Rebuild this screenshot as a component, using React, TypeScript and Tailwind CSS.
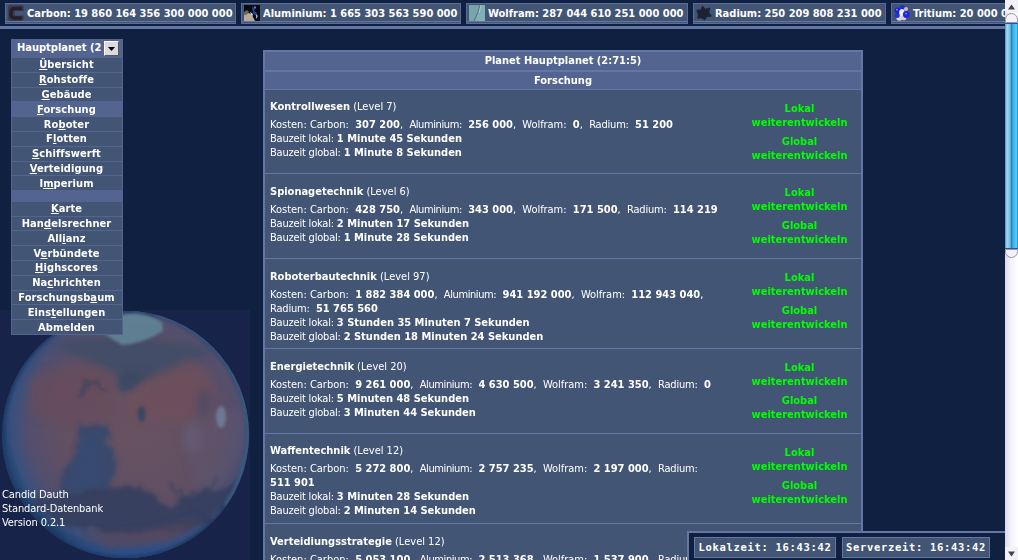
import React, { ReactNode } from "react";

function CarbonIcon() {
  return (
    <svg width="16" height="16" viewBox="0 0 16 16" className="shrink-0">
      <rect width="16" height="16" rx="3" fill="#3b3d52" />
      <path d="M14 3.5H6.5Q3 3.5 3 7v2.5Q3 13 6.5 13H14" fill="none" stroke="#241f2a" strokeWidth="3.4" />
      <rect x="7" y="6" width="9" height="4.5" fill="#435575" />
    </svg>
  );
}

function AluminiumIcon() {
  return (
    <svg width="16" height="16" viewBox="0 0 16 16" className="shrink-0">
      <rect width="16" height="16" fill="#080b14" />
      <path d="M0 10l4-2 4 1 1 3 2 4H0z" fill="#b9aa9c" />
      <path d="M0 7l3-2 2 2-3 3H0z" fill="#5c6f5d" />
      <path d="M8 2l3 1-1 3 3 2-1 3-3-3z" fill="#24459b" />
      <path d="M10 1l2 1-1 2zM12 9l2 2-2 3z" fill="#9bb5cf" />
      <path d="M6 7l3 2-1 2z" fill="#e5ddd0" />
    </svg>
  );
}

function WolframIcon() {
  return (
    <svg width="16" height="16" viewBox="0 0 16 16" className="shrink-0">
      <rect width="16" height="16" fill="#83b0b4" />
      <path d="M0 0h11L4 16H0z" fill="#78a5aa" />
      <path d="M11 0L9 7 5 16" fill="none" stroke="#56778a" strokeWidth="1.2" />
      <path d="M12 0L10 8" stroke="#a5c9c7" />
    </svg>
  );
}

function RadiumIcon() {
  return (
    <svg width="16" height="16" viewBox="0 0 16 16" className="shrink-0">
      <path d="M6.5 1.5l2.5 3 4.5-1-1 4 2.5 3.5-4.5.5-2 3-3-2-3.500.5.5-4L1 5.500l4-.5z" fill="#1d2232" stroke="#1f2537" strokeWidth="1.4" strokeLinejoin="round" />
    </svg>
  );
}

function TritiumIcon() {
  return (
    <svg width="16" height="16" viewBox="0 0 16 16" className="shrink-0">
      <circle cx="8.5" cy="3" r="2.8" fill="#1b2bd8" />
      <circle cx="3.5" cy="5.5" r="2.9" fill="#1625d4" />
      <circle cx="12" cy="4" r="2" fill="#d7b7bd" />
      <circle cx="5.5" cy="12.5" r="3.2" fill="#d9d8df" />
      <circle cx="10" cy="13" r="2.4" fill="#d8d0d4" />
      <ellipse cx="8" cy="7.5" rx="2.8" ry="3.6" fill="#f0eff2" />
      <circle cx="12.3" cy="9.5" r="3.4" fill="#1a28dc" />
      <circle cx="3.2" cy="10.5" r="2.5" fill="#2432c8" />
      <circle cx="3" cy="4.7" r=".9" fill="#8792ff" />
      <circle cx="12" cy="8.6" r=".9" fill="#8792ff" />
    </svg>
  );
}

function Resource({ icon, width, children }: { icon: ReactNode; width: string; children: ReactNode }) {
  return (
    <div className={`flex h-[21px] shrink-0 flex-col border border-[#5a6c98] bg-[#435575] ${width}`}>
      <div className="flex h-[18px] items-center gap-[3px] border-b border-[#6476a3] pl-[2px]">
        {icon}
        <span className="pt-[3px] text-[11px] leading-[14px] font-bold">{children}</span>
      </div>
    </div>
  );
}

function Planet() {
  return (
    <svg width="250" height="250" viewBox="0 0 250 250" className="absolute bottom-0 left-0">
      <defs>
        <radialGradient id="body" cx="54%" cy="46%" r="54%">
          <stop offset="0" stopColor="#68525f" />
          <stop offset=".62" stopColor="#604f64" />
          <stop offset=".82" stopColor="#504f70" />
          <stop offset=".93" stopColor="#38507d" />
          <stop offset="1" stopColor="#224470" />
        </radialGradient>
        <filter id="soft" x="-30%" y="-30%" width="160%" height="160%"><feGaussianBlur stdDeviation="4" /></filter>
        <filter id="fine" x="-30%" y="-30%" width="160%" height="160%"><feGaussianBlur stdDeviation="1.5" /></filter>
        <filter id="rough" x="-10%" y="-10%" width="120%" height="120%">
          <feTurbulence type="fractalNoise" baseFrequency="0.09" numOctaves="3" seed="4" />
          <feDisplacementMap in="SourceGraphic" scale="16" xChannelSelector="R" yChannelSelector="G" />
          <feGaussianBlur stdDeviation="2.2" />
        </filter>
        <clipPath id="disc"><circle cx="125.5" cy="124.5" r="123.5" /></clipPath>
      </defs>
      <rect width="250" height="250" fill="#172348" />
      <circle cx="125.5" cy="124.5" r="123.5" fill="url(#body)" />
      <g clipPath="url(#disc)">
        <g filter="url(#soft)">
          <path d="M50 35Q120 15 215 40L182 60 150 68 122 78 112 62 80 48z" fill="#414d67" opacity=".9" />
          <path d="M30 70Q70 45 110 68L116 104 70 112 30 105z" fill="#6a4c58" opacity=".6" />
          <path d="M140 74L190 48 215 75 190 110 150 112 120 100z" fill="#70505b" opacity=".65" />
          <path d="M-10 100Q14 60 50 25L20 20-20 120 0 200 22 200Q2 150 -10 100z" fill="#2a4c80" />
          <path d="M245 100Q245 160 200 200L190 150 215 100z" fill="#5c5874" opacity=".4" />
          <ellipse cx="193" cy="128" rx="10" ry="16" fill="#64617c" opacity=".6" />
          <ellipse cx="203" cy="92" rx="7" ry="14" fill="#484a67" opacity=".6" />
          <path d="M-4 160Q14 195 60 230L50 255-8 220z" fill="#1b3057" />
          <path d="M60 232Q120 247 195 226L160 255H80z" fill="#2c508a" />
        </g>
        <g filter="url(#rough)">
          <path d="M80 114l28-1 2 24 6 24-8 22-48 2 2-20 13-18z" fill="#37486d" opacity=".9" />
          <path d="M30 192L70 182 110 178 134 176 154 182 166 196 190 184 215 182 240 170 210 218 130 226 60 216z" fill="#333f5e" opacity=".9" />
          <path d="M124 58l24 4-8 12-16 10-8-4z" fill="#3c4964" />
        </g>
        <g filter="url(#soft)">
          <path d="M84 126l12-4 8 38-14 18-20 0z" fill="#2f4978" opacity=".5" />
          <path d="M76 222Q130 232 200 208L170 232 110 238z" fill="#59495a" opacity=".8" />
        </g>
        <g filter="url(#fine)">
          <path d="M88 14L140 0 162 12 163 21Q142 34 122 35z" fill="#5f8496" opacity=".9" />
          <ellipse cx="141.5" cy="104" rx="4" ry="8" fill="#3d4562" />
          <ellipse cx="221" cy="107" rx="5" ry="11" fill="#71829f" opacity=".8" />
          <path d="M84 68l8 3 6-2 4 7-9-2-6 5-5 10-4-1 3-9zM94 74l15 7-8 0z" fill="#45465f" opacity=".8" />
          <path d="M170 172l6 12 4-5 6 11 7-8 6 4 6-8 6 3 6-14" fill="none" stroke="#35415f" strokeWidth="2" opacity=".7" />
        </g>
        <circle cx="125.5" cy="124.5" r="123" fill="none" stroke="#1a355d" strokeWidth="2.5" filter="url(#fine)" />
        <path d="M155 4A123 123 0 0 1 225 195" fill="none" stroke="#3d6b8c" strokeWidth="2.5" filter="url(#fine)" />
      </g>
    </svg>
  );
}

const MENU_TOP = ["_Übersicht", "_Rohstoffe", "_Gebäude", "_Forschung", "Ro_boter", "F_lotten", "_Schiffswerft", "_Verteidigung", "I_mperium"];
const MENU_BOTTOM = ["_Karte", "Han_delsrechner", "All_ianz", "V_erbündete", "_Highscores", "Na_chrichten", "Forschungsb_aum", "Eins_tellungen", "Abmelden"];

function MenuItem({ label }: { label: string }) {
  const at = label.indexOf("_");
  return (
    <li className={`flex h-[14.8px] items-center justify-center border-t border-[#53658f] pr-px text-[11px] leading-[13px] font-bold tracking-[0.1px] ${label === "_Forschung" ? "bg-[#52648f]" : "bg-[#435575]"}`}>
      {at < 0 ? label : <span>{label.slice(0, at)}<span className="underline underline-offset-1">{label[at + 1]}</span>{label.slice(at + 2)}</span>}
    </li>
  );
}

interface Tech {
  name: string;
  level: number;
  costs: [string, string][];
  local: string;
  global: string;
  height: string;
  offset: string;
}

const TECHS: Tech[] = [
  { name: "Kontrollwesen", level: 7, costs: [["Carbon", "307 200"], ["Aluminium", "256 000"], ["Wolfram", "0"], ["Radium", "51 200"]], local: "1 Minute 45 Sekunden", global: "1 Minute 8 Sekunden", height: "h-[84px]", offset: "pt-[10px]" },
  { name: "Spionagetechnik", level: 6, costs: [["Carbon", "428 750"], ["Aluminium", "343 000"], ["Wolfram", "171 500"], ["Radium", "114 219"]], local: "2 Minuten 17 Sekunden", global: "1 Minute 28 Sekunden", height: "h-[85px]", offset: "pt-[11px]" },
  { name: "Roboterbautechnik", level: 97, costs: [["Carbon", "1 882 384 000"], ["Aluminium", "941 192 000"], ["Wolfram", "112 943 040"], ["Radium", "51 765 560"]], local: "3 Stunden 35 Minuten 7 Sekunden", global: "2 Stunden 18 Minuten 24 Sekunden", height: "h-[90px]", offset: "pt-[11px]" },
  { name: "Energietechnik", level: 20, costs: [["Carbon", "9 261 000"], ["Aluminium", "4 630 500"], ["Wolfram", "3 241 350"], ["Radium", "0"]], local: "5 Minuten 48 Sekunden", global: "3 Minuten 44 Sekunden", height: "h-[85px]", offset: "pt-[11px]" },
  { name: "Waffentechnik", level: 12, costs: [["Carbon", "5 272 800"], ["Aluminium", "2 757 235"], ["Wolfram", "2 197 000"], ["Radium", "511 901"]], local: "3 Minuten 28 Sekunden", global: "2 Minuten 14 Sekunden", height: "h-[90px]", offset: "pt-[10px]" },
  { name: "Verteidiungsstrategie", level: 12, costs: [["Carbon", "5 053 100"], ["Aluminium", "2 513 368"], ["Wolfram", "1 537 900"], ["Radium", "498 210"]], local: "3 Minuten 12 Sekunden", global: "2 Minuten 4 Sekunden", height: "h-[90px]", offset: "pt-[11px]" },
];

const LABEL_TRACKING: Record<string, string> = {
  Carbon: "",
  Aluminium: "tracking-[-0.4px]",
  Wolfram: "tracking-[-0.05px]",
  Radium: "tracking-[-0.2px]",
};

function TechRow({ tech }: { tech: Tech }) {
  return (
    <div className={`flex shrink-0 border-t border-[#6476a3] bg-[#435575] pl-[5px] ${tech.height}`}>
      <div className={`w-[467px] shrink-0 pr-[13px] leading-[14px] ${tech.offset}`}>
        <h3 className="mb-[4px]"><b>{tech.name}</b> (Level {tech.level})</h3>
        <p>
          Kosten:{" "}
          {tech.costs.map(([name, value], i) => (
            <React.Fragment key={name}>
              <span className={LABEL_TRACKING[name]}>{name}:</span>&nbsp; <b className="whitespace-nowrap">{value}</b>{i < 3 && <>,&nbsp; </>}
            </React.Fragment>
          ))}
        </p>
        <p><span className="tracking-[-0.2px]">Bauzeit lokal: </span><b>{tech.local}</b></p>
        <p><span className="tracking-[-0.2px]">Bauzeit global: </span><b>{tech.global}</b></p>
      </div>
      <div className="flex w-[124px] shrink-0 flex-col gap-[5px] pt-[12px] pl-px text-center leading-[14px] font-bold text-[#00ff00]">
        <p>Lokal<br />weiterentwickeln</p>
        <p>Global<br />weiterentwickeln</p>
      </div>
    </div>
  );
}

function Scrollbar() {
  return (
    <div className="flex w-[13px] shrink-0 flex-col bg-linear-to-r from-[#dcdae8] via-[#f5f4fb] to-white">
      <div className="flex h-[13px] items-center justify-center bg-[#f2f1f8]">
        <svg width="7" height="6"><path d="M3.5 0.5L7 5.5H0z" fill="#444" /></svg>
      </div>
      <div className="h-[10px] rounded-t-full border border-[#9896a3] bg-[#f3f3f7]" />
      <div className="h-[226px] border-y border-[#1d5aa0] bg-[linear-gradient(90deg,#4b8fc8_0,#a6d8f0_15%,#6fb9e2_40%,#2686c4_50%,#38b2e4_62%,#55cdf2_88%,#2b74b4_100%)]" />
      <div className="h-[9px] rounded-b-full border border-[#9896a3] bg-[#f3f3f7]" />
      <div className="grow" />
      <div className="flex h-[13px] items-center justify-center bg-[#f2f1f8]">
        <svg width="7" height="6"><path d="M3.5 5.5L0 .5h7z" fill="#444" /></svg>
      </div>
    </div>
  );
}

export default function App() {
  return (
    <div className="flex h-[560px] w-[1018px] overflow-hidden bg-[#102040] font-['DejaVu_Sans_Condensed','DejaVu_Sans',sans-serif] text-[11px] text-white">
      <div className="relative flex w-[1005px] flex-col overflow-hidden">
        <Planet />
        <header className="flex h-[29px] shrink-0 gap-[5px] border-b-[3px] border-[#6476a3] pt-[3px] pl-[5px] whitespace-nowrap">
          <Resource icon={<CarbonIcon />} width="w-[231px]">Carbon: 19 860 164 356 300 000 000</Resource>
          <Resource icon={<AluminiumIcon />} width="w-[220px]">Aluminium: 1 665 303 563 590 000</Resource>
          <Resource icon={<WolframIcon />} width="w-[222px]">Wolfram: 287 044 610 251 000 000</Resource>
          <Resource icon={<RadiumIcon />} width="w-[193px]">Radium: 250 209 808 231 000</Resource>
          <Resource icon={<TritiumIcon />} width="w-[220px]">Tritium: 20 000 000 000 000</Resource>
        </header>
        <div className="relative flex min-h-0 grow items-start">
          <nav className="mt-[10px] ml-[11px] w-[112px] border border-[#53658f] bg-[#52648f]">
            <div className="flex h-[17px] items-center pl-[5px] text-[11px] font-bold whitespace-nowrap">
              <span className="w-[87px]">Hauptplanet (2</span>
              <span className="flex h-[15px] w-[15px] shrink-0 items-center justify-center border border-t-white border-r-[#555] border-b-[#555] border-l-white bg-[#dcdadf]">
                <svg width="7" height="4"><path d="M0 0h7L3.5 4z" fill="#000" /></svg>
              </span>
            </div>
            <ul>{MENU_TOP.map((m) => <MenuItem key={m} label={m} />)}</ul>
            <div className="h-[10.6px] border-t border-[#53658f]" />
            <ul>{MENU_BOTTOM.map((m) => <MenuItem key={m} label={m} />)}</ul>
          </nav>
          <main className="mt-[21px] ml-[140px] flex w-[600px] flex-col border-2 border-[#6476a3]">
            <h1 className="flex h-[18px] items-center justify-center bg-[#52648f] pt-px font-bold">Planet Hauptplanet (2:71:5)</h1>
            <h2 className="flex h-[19px] items-center justify-center border-t-2 border-[#6476a3] bg-[#52648f] pt-px font-bold">Forschung</h2>
            {TECHS.map((t) => <TechRow key={t.name} tech={t} />)}
          </main>
        </div>
        <footer className="absolute bottom-[30px] left-[2px] h-[42px] leading-[14px] tracking-[-0.1px]">
          <p>Candid Dauth</p>
          <p>Standard-Datenbank</p>
          <p>Version 0.2.1</p>
        </footer>
        <div className="absolute right-0 bottom-0 flex h-[29px] w-[318px] gap-[6px] border-t-2 border-l-2 border-[#6476a3] bg-[#102040] pt-[4px] pl-[5px] font-['DejaVu_Sans_Mono',monospace] text-[10.5px] tracking-[0.68px] font-bold whitespace-nowrap">
          <div className="flex h-[21px] w-[142px] items-center justify-center border border-[#6476a3] bg-[#435575]">Lokalzeit: 16:43:42</div>
          <div className="flex h-[21px] w-[148px] items-center justify-center border border-[#6476a3] bg-[#435575]">Serverzeit: 16:43:42</div>
        </div>
      </div>
      <Scrollbar />
    </div>
  );
}
